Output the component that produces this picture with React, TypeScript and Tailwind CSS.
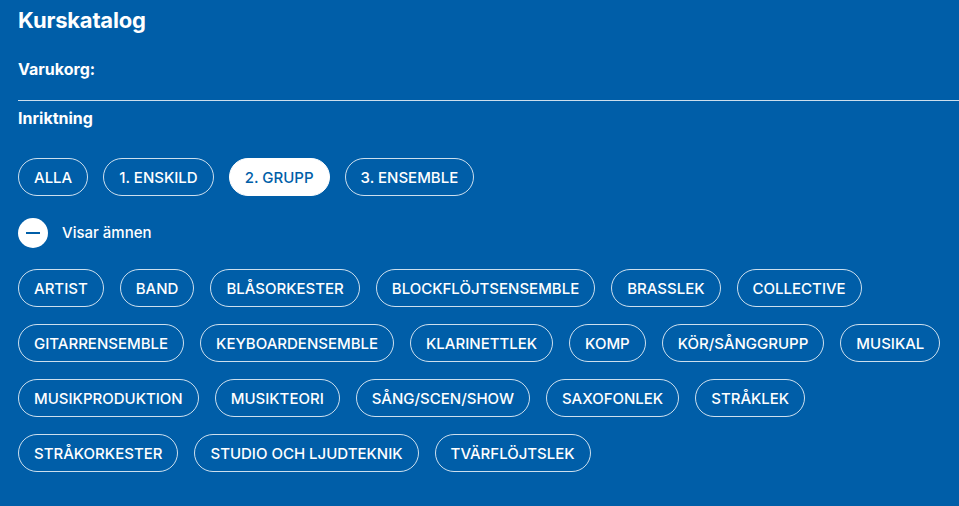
import React from "react";

const inriktningar = ["ALLA", "1. ENSKILD", "2. GRUPP", "3. ENSEMBLE"];

const amnen = [
  "ARTIST", "BAND", "BLÅSORKESTER", "BLOCKFLÖJTSENSEMBLE", "BRASSLEK", "COLLECTIVE",
  "GITARRENSEMBLE", "KEYBOARDENSEMBLE", "KLARINETTLEK", "KOMP", "KÖR/SÅNGGRUPP", "MUSIKAL",
  "MUSIKPRODUKTION", "MUSIKTEORI", "SÅNG/SCEN/SHOW", "SAXOFONLEK", "STRÅKLEK",
  "STRÅKORKESTER", "STUDIO OCH LJUDTEKNIK", "TVÄRFLÖJTSLEK",
];

function Pill({ label, active = false }: { label: string; active?: boolean }) {
  return (
    <button
      className={
        active
          ? "h-[38px] px-[15px] rounded-full border border-white bg-white text-[#005ea8] text-[15px] font-medium leading-none whitespace-nowrap"
          : "h-[38px] px-[15px] rounded-full border border-white/80 text-white text-[15px] font-medium leading-none whitespace-nowrap"
      }
    >
      {label}
    </button>
  );
}

export default function App() {
  return (
    <div
      className="w-[959px] h-[506px] overflow-hidden bg-[#005ea8] text-white pl-[18px]"
      style={{ fontFamily: "Inter, 'Liberation Sans', sans-serif" }}
    >
      <h1 className="pt-[6px] text-[22px] font-bold leading-[28px] tracking-[-0.2px]">Kurskatalog</h1>
      <div className="mt-[25px] text-[16px] font-bold leading-[20px]">Varukorg:</div>
      <div className="mt-[21px] border-t border-white/80" />
      <div className="mt-[7px] text-[16px] font-bold leading-[20px]">Inriktning</div>

      <div className="mt-[30px] flex gap-[15px]">
        {inriktningar.map((l) => (
          <Pill key={l} label={l} active={l === "2. GRUPP"} />
        ))}
      </div>

      <div className="mt-[22px] flex items-center gap-[14px]">
        <span className="w-[30px] h-[30px] rounded-full bg-white flex items-center justify-center">
          <span className="w-[14px] h-[2px] bg-[#005ea8]" />
        </span>
        <span className="text-[15px] font-medium">Visar ämnen</span>
      </div>

      <div className="mt-[21px] flex flex-wrap gap-x-[16px] gap-y-[17px] pr-[10px]">
        {amnen.map((l) => (
          <Pill key={l} label={l} />
        ))}
      </div>
    </div>
  );
}
